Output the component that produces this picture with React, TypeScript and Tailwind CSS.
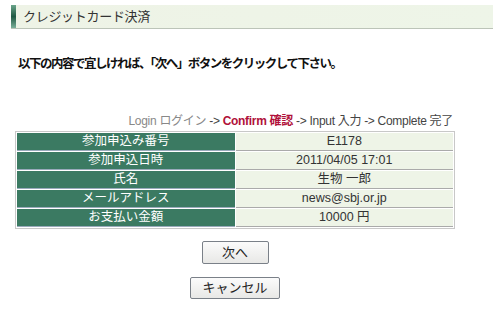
import React from "react";

const rows: [string, string][] = [
  ["参加申込み番号", "E1178"],
  ["参加申込日時", "2011/04/05 17:01"],
  ["氏名", "生物 一郎"],
  ["メールアドレス", "news@sbj.or.jp"],
  ["お支払い金額", "10000 円"],
];

const font = { fontFamily: '"Liberation Sans", Arial, "Noto Sans CJK JP", sans-serif' };

export default function App() {
  return (
    <div className="w-[500px] h-[312px] bg-white overflow-hidden text-[#222]" style={font}>
      {/* page heading */}
      <div className="pt-[5px] pl-[11px] pr-[7px]">
        <div className="flex items-stretch h-[24px] bg-gradient-to-r from-[#eef3e6] to-[#eef5e8] border-b border-[#bcc4b8]">
          <div className="w-[5px] bg-gradient-to-b from-[#6aa58b] via-[#1f5a44] to-[#7ab09a]" />
          <div className="flex items-center pl-[7px] text-[13px] text-[#333] tracking-[-0.3px]">クレジットカード決済</div>
        </div>
      </div>

      <p className="mt-[27px] pl-[18px] text-[12.5px] font-bold text-[#111] leading-[16px] tracking-[-1.5px]">
        以下の内容で宜しければ、「次へ」ボタンをクリックして下さい。
      </p>

      <div className="ml-[15px] w-[440px]">
        <div className="mt-[42px] text-right pr-[2px] text-[12px] leading-[15px] text-[#444] tracking-[-0.3px]">
          <span className="text-[#888]">Login ログイン</span>
          <span> -&gt; </span>
          <span className="font-bold text-[#b0103a]">Confirm 確認</span>
          <span> -&gt; Input 入力 -&gt; Complete 完了</span>
        </div>

        <table className="mt-[2px] w-full border-separate border-spacing-[1px] bg-white border border-[#c8c8c8] text-[12.5px]">
          <tbody>
            {rows.map(([k, v]) => (
              <tr key={k}>
                <td className="w-1/2 h-[18px] p-0 text-center text-white bg-[#3b7a62] border-b border-[#9ab] leading-[17px]">
                  {k}
                </td>
                <td className="w-1/2 h-[18px] p-0 text-center text-[#333] bg-[#eef4e7] border-b border-[#aaa] leading-[17px]">
                  {v}
                </td>
              </tr>
            ))}
          </tbody>
        </table>

        <div className="flex flex-col items-center">
          <button className="mt-[12px] w-[67px] h-[23px] text-[13px] text-[#222] bg-gradient-to-b from-[#fbfbfb] to-[#e8e8e6] border border-[#7a8088] rounded-[2px]">
            次へ
          </button>
          <button className="mt-[13px] w-[90px] h-[22px] text-[13px] text-[#222] bg-gradient-to-b from-[#fbfbfb] to-[#e8e8e6] border border-[#7a8088] rounded-[2px]">
            キャンセル
          </button>
        </div>
      </div>
    </div>
  );
}
